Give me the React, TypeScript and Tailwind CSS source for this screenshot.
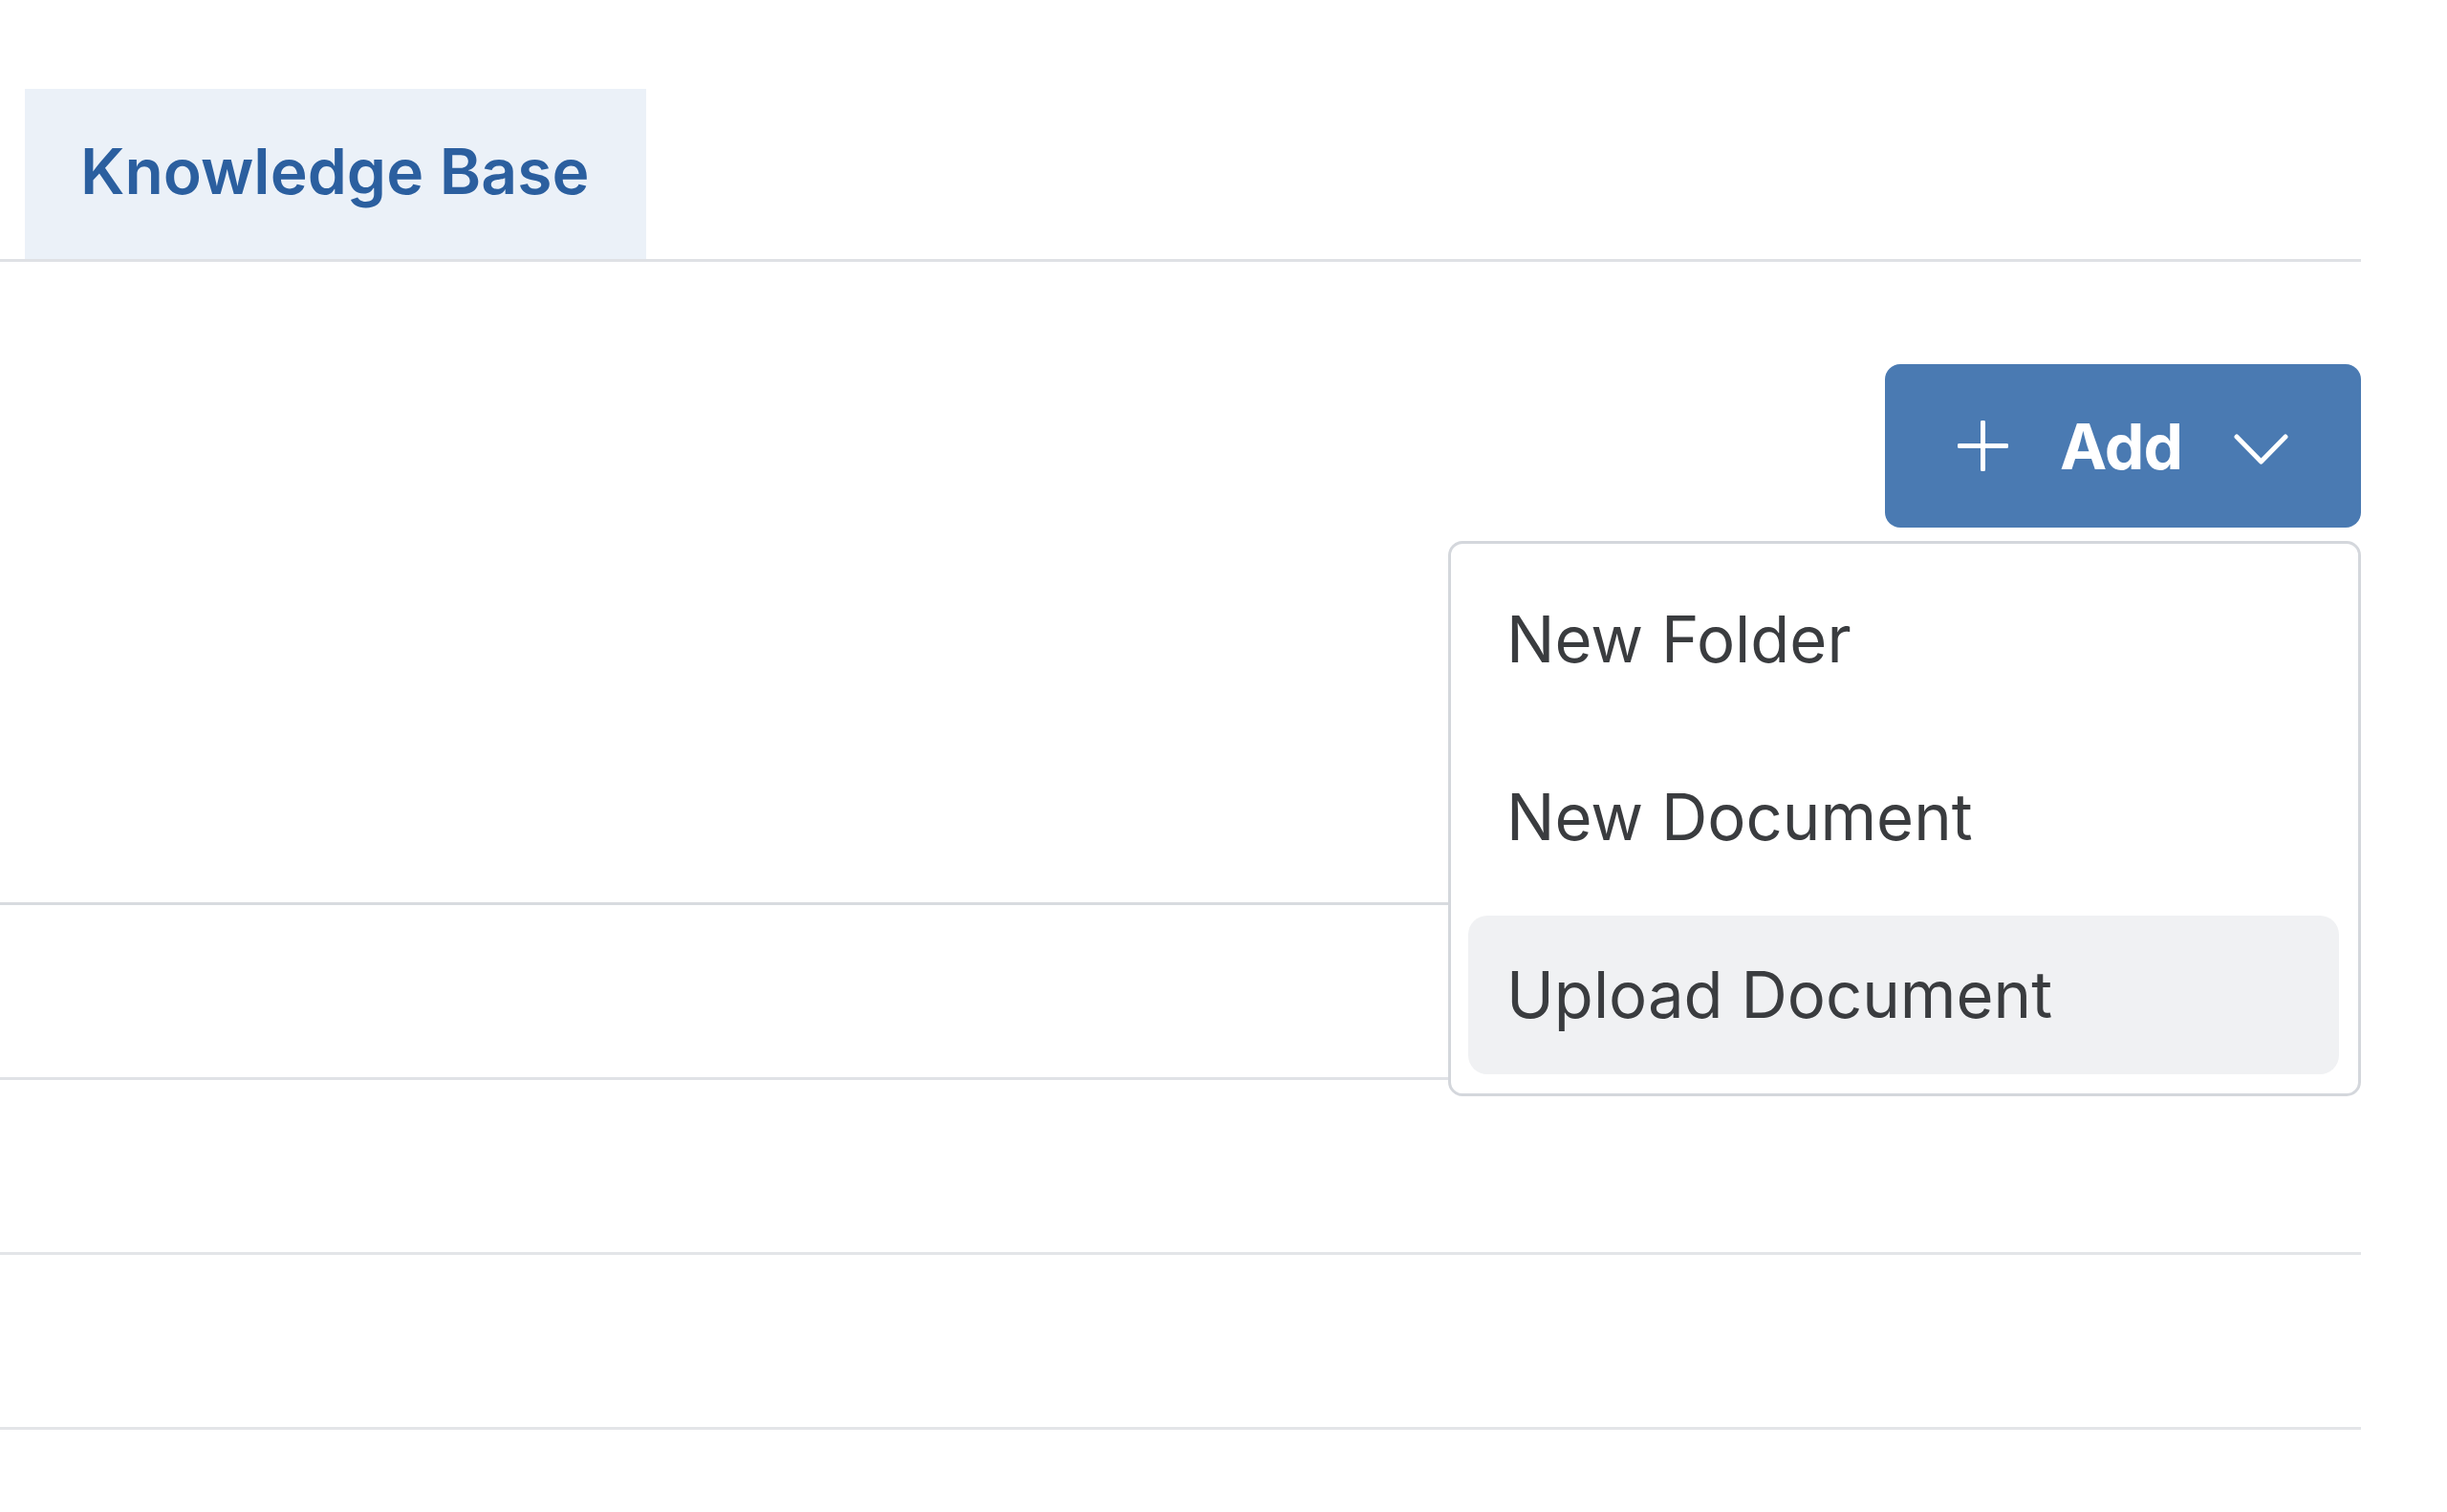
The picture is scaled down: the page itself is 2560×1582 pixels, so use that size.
import React from "react";

function PlusIcon() {
  return (
    <svg width="53" height="53" viewBox="0 0 53 53" fill="none">
      <path d="M26.5 2v49M2 26.5h49" stroke="white" strokeWidth="5" strokeLinecap="round" />
    </svg>
  );
}

function ChevronIcon() {
  return (
    <svg width="57" height="32" viewBox="0 0 57 32" fill="none">
      <path d="M3 3l25.5 26L54 3" stroke="white" strokeWidth="5" strokeLinecap="round" strokeLinejoin="round" />
    </svg>
  );
}

const items = [
  { label: "New Folder", active: false },
  { label: "New Document", active: false },
  { label: "Upload Document", active: true },
];

export default function App() {
  return (
    <div className="min-h-screen bg-white font-['Inter','Noto_Sans',sans-serif]">
      <div className="w-[2470px]">
        <div className="pl-[26px] pt-[93px] border-b-[3px] border-[#dfe1e5]">
          <div className="flex h-[178px] w-[650px] items-center bg-[#ebf1f8] pb-[5px] pl-[58px] text-[66px] font-semibold text-[#2b5f9f]">
            Knowledge Base
          </div>
        </div>

        <div className="relative flex justify-end pt-[107px]">
          <button className="flex h-[171px] w-[498px] items-center justify-center gap-[54px] rounded-[16px] bg-[#4a7ab2] text-white">
            <PlusIcon />
            <span className="text-[66px] font-bold leading-none tracking-[-1px]">Add</span>
            <span className="pt-[6px]">
              <ChevronIcon />
            </span>
          </button>

          <div className="absolute right-0 top-[292px] z-10 flex w-[955px] flex-col gap-[20px] rounded-[15px] border-[3px] border-[#d4d7dc] bg-white pb-[20px] pl-[18px] pr-[20px] pt-[17px]">
            {items.map((item) => (
              <div
                key={item.label}
                className={`flex h-[166px] items-center rounded-[20px] pl-[40px] text-[67px] text-[#3a3c3f] ${
                  item.active ? "bg-[#f0f1f3]" : ""
                }`}
              >
                {item.label}
              </div>
            ))}
          </div>
        </div>

        <div className="h-[395px] border-b-[3px] border-[#d8dbdf]" />
        <div className="h-[183px] border-b-[3px] border-[#e0e2e6]" />
        <div className="h-[183px] border-b-[3px] border-[#e3e5e8]" />
        <div className="h-[183px] border-b-[3px] border-[#e3e5e8]" />
      </div>
    </div>
  );
}
